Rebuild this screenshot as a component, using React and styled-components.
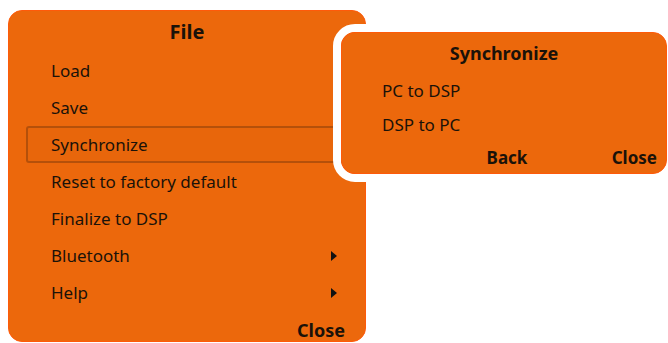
import styled, { createGlobalStyle } from "styled-components";

const GlobalStyle = createGlobalStyle`
  html, body {
    margin: 0;
    padding: 0;
    background: #ffffff;
  }
  body {
    font-family: "Noto Sans", "Open Sans", sans-serif;
    color: #1a1209;
  }
`;

const Stage = styled.div`
  position: relative;
  width: 668px;
  height: 343px;
  overflow: hidden;
  padding: 10px 0 0 8px;
  box-sizing: border-box;
`;

const Panel = styled.div`
  width: 358px;
  height: 332px;
  box-sizing: border-box;
  background: #ec680c;
  border: 1px solid #ff5a0a;
  border-radius: 14px;
  display: flex;
  flex-direction: column;
`;

const Title = styled.div`
  height: ${(p) => p.$height}px;
  display: flex;
  align-items: center;
  justify-content: center;
  font-weight: 700;
  font-size: ${(p) => p.$size}px;
  flex-shrink: 0;
`;

const Item = styled.div`
  height: 37px;
  flex-shrink: 0;
  box-sizing: border-box;
  display: flex;
  align-items: center;
  justify-content: space-between;
  margin: 0 17px;
  padding: 0 9px 0 23px;
  font-size: 17px;
  border: 2px solid ${(p) => (p.$active ? "#b5500a" : "transparent")};
  border-radius: 3px;
  background: ${(p) => (p.$active ? "#e8660b" : "transparent")};
`;

const Arrow = styled.span`
  width: 0;
  height: 0;
  border-top: 5px solid transparent;
  border-bottom: 5px solid transparent;
  border-left: 6px solid #111;
`;

const PanelFooter = styled.div`
  height: 37px;
  flex-shrink: 0;
  display: flex;
  align-items: center;
  justify-content: flex-end;
  padding-right: 20px;
  font-weight: 700;
  font-size: 18px;
`;

const Popup = styled.div`
  position: absolute;
  left: 333px;
  top: 24px;
  border: 8px solid #ffffff;
  border-radius: 22px;
`;

const PopupBody = styled.div`
  width: 326px;
  box-sizing: border-box;
  background: #ec680c;
  border: 1px solid #ff5a0a;
  border-radius: 14px;
  display: flex;
  flex-direction: column;
`;

const PopupItem = styled.div`
  height: 34px;
  display: flex;
  align-items: center;
  padding-left: 40px;
  font-size: 17px;
`;

const PopupFooter = styled.div`
  height: 32px;
  display: grid;
  grid-template-columns: 1fr auto 1fr;
  align-items: center;
  padding: 0 9px 0 15px;
  font-weight: 700;
  font-size: 17px;
`;

const FooterButton = styled.span`
  grid-column: ${(p) => p.$col};
  justify-self: ${(p) => p.$align};
`;

const items = [
  { label: "Load" },
  { label: "Save" },
  { label: "Synchronize", active: true },
  { label: "Reset to factory default" },
  { label: "Finalize to DSP" },
  { label: "Bluetooth", sub: true },
  { label: "Help", sub: true },
];

export default function App() {
  return (
    <>
      <GlobalStyle />
      <Stage>
        <Panel>
          <Title $height={41} $size={20}>File</Title>
          {items.map((it) => (
            <Item key={it.label} $active={it.active}>
              <span>{it.label}</span>
              {it.sub && <Arrow />}
            </Item>
          ))}
          <PanelFooter>Close</PanelFooter>
        </Panel>
        <Popup>
          <PopupBody>
            <Title $height={40} $size={18}>Synchronize</Title>
            <PopupItem>PC to DSP</PopupItem>
            <PopupItem>DSP to PC</PopupItem>
            <PopupFooter>
              <FooterButton $col={2} $align="center">Back</FooterButton>
              <FooterButton $col={3} $align="end">Close</FooterButton>
            </PopupFooter>
          </PopupBody>
        </Popup>
      </Stage>
    </>
  );
}
